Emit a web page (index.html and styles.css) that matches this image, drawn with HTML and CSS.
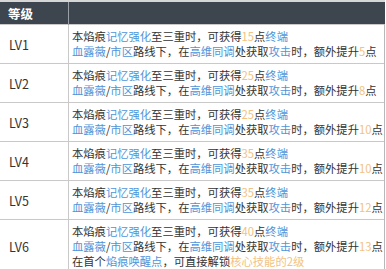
FILE: index.html
```html
<!DOCTYPE html>
<html lang="zh-CN">
<head>
<meta charset="utf-8">
<link rel="stylesheet" href="styles.css">
</head>
<body>
<table class="tbl">
  <thead>
    <tr><th class="c-lv">等级</th><th class="c-desc"></th></tr>
  </thead>
  <tbody>
    <tr><td class="c-lv">LV1</td><td class="c-desc">本焰痕<span class="b">记忆强化</span>至三重时，可获得<span class="o">15</span>点<span class="b">终端</span><br><span class="b">血露薇</span>/<span class="b">市区</span>路线下，在<span class="b">高维同调</span>处获取<span class="b">攻击</span>时，额外提升<span class="o">5</span>点</td></tr>
    <tr><td class="c-lv">LV2</td><td class="c-desc">本焰痕<span class="b">记忆强化</span>至三重时，可获得<span class="o">25</span>点<span class="b">终端</span><br><span class="b">血露薇</span>/<span class="b">市区</span>路线下，在<span class="b">高维同调</span>处获取<span class="b">攻击</span>时，额外提升<span class="o">8</span>点</td></tr>
    <tr><td class="c-lv">LV3</td><td class="c-desc">本焰痕<span class="b">记忆强化</span>至三重时，可获得<span class="o">25</span>点<span class="b">终端</span><br><span class="b">血露薇</span>/<span class="b">市区</span>路线下，在<span class="b">高维同调</span>处获取<span class="b">攻击</span>时，额外提升<span class="o">10</span>点</td></tr>
    <tr><td class="c-lv">LV4</td><td class="c-desc">本焰痕<span class="b">记忆强化</span>至三重时，可获得<span class="o">35</span>点<span class="b">终端</span><br><span class="b">血露薇</span>/<span class="b">市区</span>路线下，在<span class="b">高维同调</span>处获取<span class="b">攻击</span>时，额外提升<span class="o">10</span>点</td></tr>
    <tr><td class="c-lv">LV5</td><td class="c-desc">本焰痕<span class="b">记忆强化</span>至三重时，可获得<span class="o">35</span>点<span class="b">终端</span><br><span class="b">血露薇</span>/<span class="b">市区</span>路线下，在<span class="b">高维同调</span>处获取<span class="b">攻击</span>时，额外提升<span class="o">12</span>点</td></tr>
    <tr><td class="c-lv">LV6</td><td class="c-desc">本焰痕<span class="b">记忆强化</span>至三重时，可获得<span class="o">40</span>点<span class="b">终端</span><br><span class="b">血露薇</span>/<span class="b">市区</span>路线下，在<span class="b">高维同调</span>处获取<span class="b">攻击</span>时，额外提升<span class="o">13</span>点<br>在首个<span class="b">焰痕唤醒点</span>，可直接解锁<span class="o">核心技能的2级</span></td></tr>
  </tbody>
</table>
</body>
</html>
```
FILE: styles.css
```css
html, body {
  margin: 0;
  padding: 0;
  background: #ffffff;
}
body {
  font-family: "Noto Sans CJK SC", "Noto Sans", sans-serif;
  color: #333333;
}
.tbl {
  width: 385px;
  border-collapse: collapse;
  table-layout: fixed;
  font-size: 11.3px;
  line-height: 15px;
}
.tbl thead tr {
  background: #3d454e;
  border-top: 2px solid #d6d6d6;
}
.tbl th {
  height: 22px;
  padding: 0 0 0 8px;
  text-align: left;
  color: #ffffff;
  font-weight: bold;
  font-size: 12.5px;
  border-left: 1px solid #9aa0a6;
}
.tbl th:first-child {
  border-left: none;
}
.tbl td {
  padding: 4px 0 4px 3px;
  border-top: 1px solid #c9c9c9;
  border-left: 1px solid #c9c9c9;
  vertical-align: middle;
}
.tbl td:first-child {
  border-left: none;
  padding-left: 9px;
  font-size: 12.5px;
  color: #333333;
}
.tbl td:last-child {
  border-right: 1px solid #b8b8b8;
}
.c-lv {
  width: 60px;
}
.b {
  color: #4f94d8;
}
.o {
  color: #f3c27f;
}
```
